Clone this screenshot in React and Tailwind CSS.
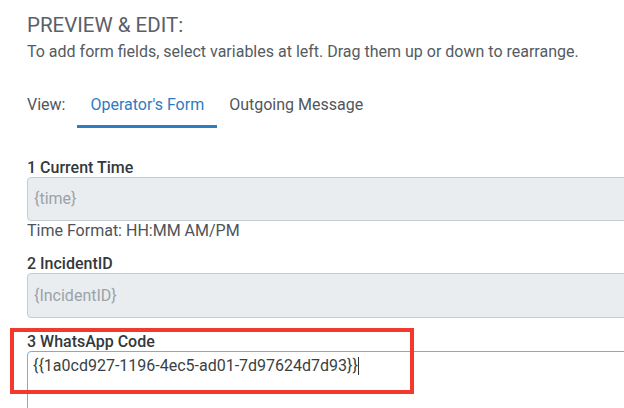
export default function App() {
  return (
    <div
      className="relative w-[624px] h-[408px] overflow-hidden bg-white pl-[27px]"
      style={{ fontFamily: 'Roboto, "Noto Sans", sans-serif' }}
    >
      {/* Header */}
      <h1 className="pt-[11px] text-[20.5px] leading-[28px] font-normal text-[#5a6067]">
        PREVIEW &amp; EDIT:
      </h1>
      <p className="mt-[3px] text-[16px] leading-[20px] text-[#555b61]">
        To add form fields, select variables at left. Drag them up or down to rearrange.
      </p>

      {/* View tabs */}
      <div className="mt-[33px] flex items-start text-[16px] leading-[20px]">
        <span className="text-[#50565c] pr-[12px]">View:</span>
        <button className="px-[13px] pb-[10px] border-b-[3px] border-[#2f7dc0] text-[#2e7bc0]">
          Operator's Form
        </button>
        <button className="px-[12px] pb-[10px] border-b-[3px] border-transparent text-[#50565c]">
          Outgoing Message
        </button>
      </div>

      {/* Fields */}
      <div className="mt-[31px] w-[640px]">
        <label className="block text-[16px] leading-[18px] font-medium text-[#33383d]">
          1 Current Time
        </label>
        <div className="h-[44px] flex items-center px-[6px] rounded-[4px] border border-[#c6ccd1] bg-[#e9edef] text-[16px] text-[#9ba2a9]">
          {'{time}'}
        </div>
        <p className="mt-[1px] text-[16px] leading-[18px] text-[#4d5358]">Time Format: HH:MM AM/PM</p>

        <label className="mt-[15px] block text-[16px] leading-[18px] font-medium text-[#33383d]">
          2 IncidentID
        </label>
        <div className="h-[45px] flex items-center px-[6px] rounded-[4px] border border-[#c6ccd1] bg-[#e9edef] text-[16px] text-[#9ba2a9]">
          {'{IncidentID}'}
        </div>

        <div className="relative mt-[15px]">
          <label className="block text-[16px] leading-[18px] font-medium text-[#33383d]">
            3 WhatsApp Code
          </label>
          <div className="h-[80px] px-[5px] pt-[4px] rounded-[4px] border border-[#78ade0] bg-white text-[16px] leading-[20px] text-[#3a3f44]">
            {'{{1a0cd927-1196-4ec5-ad01-7d97624d7d93}}'}
            <span className="inline-block w-px h-[18px] bg-[#333] align-[-4px]" />
          </div>

          {/* Highlight box */}
          <div className="absolute left-[-17px] top-[-5px] w-[404px] h-[66px] border-4 border-[#f2392c] pointer-events-none" />
        </div>
      </div>
    </div>
  )
}
